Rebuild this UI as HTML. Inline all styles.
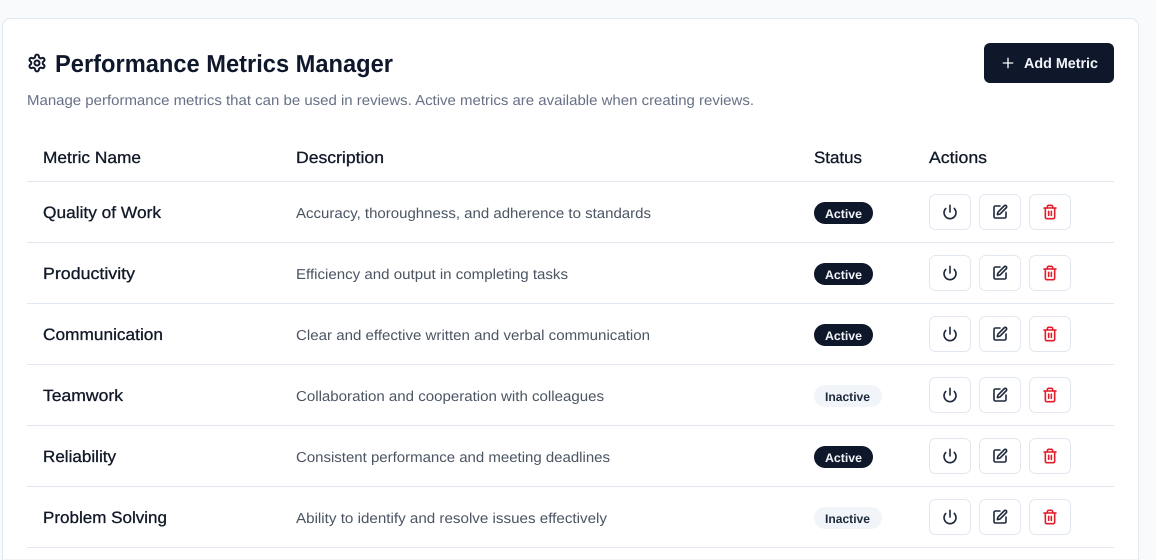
<!DOCTYPE html>
<html lang="en">
<head>
<meta charset="utf-8">
<title>Performance Metrics Manager</title>
<style>
html,body{margin:0;padding:0;width:1156px;height:560px;overflow:hidden;background:#f8fafc}
svg{display:block}
text{font-family:"Liberation Sans",sans-serif;text-rendering:geometricPrecision}
.th,.name{font-size:16.4px;fill:#111827;stroke:#111827;stroke-width:.3px}
.desc{font-size:14.4px;fill:#4b5563}
.sub{font-size:14.4px;fill:#667085}
.bt{font-size:12.4px;font-weight:700}
.i{fill:none;stroke-width:2.4;stroke-linecap:round;stroke-linejoin:round}
</style>
</head>
<body>
<svg width="1156" height="560" viewBox="0 0 1156 560" xmlns="http://www.w3.org/2000/svg">
<defs>
<g id="power" class="i" stroke="#1e293b" transform="scale(.6667)"><path d="M12 2v10"/><path d="M18.4 6.6a9 9 0 1 1-12.77.04"/></g>
<g id="pen" class="i" stroke="#1e293b" transform="scale(.6667)"><path d="M12 3H5a2 2 0 0 0-2 2v14a2 2 0 0 0 2 2h14a2 2 0 0 0 2-2v-7"/><path d="M18.375 2.625a1 1 0 0 1 3 3l-9.013 9.014a2 2 0 0 1-.853.505l-2.873.84a.5.5 0 0 1-.62-.62l.84-2.873a2 2 0 0 1 .506-.852z"/></g>
<g id="trash" class="i" stroke="#e11d2a" transform="scale(.6667)"><path d="M3 6h18"/><path d="M19 6v14c0 1-1 2-2 2H7c-1 0-2-1-2-2V6"/><path d="M8 6V4c0-1 1-2 2-2h4c1 0 2 1 2 2v2"/><path d="M10 11v6"/><path d="M14 11v6"/></g>
<g id="btns">
<rect x="929.5" y=".5" width="41" height="35" rx="6" fill="#fff" stroke="#e2e8f0"/>
<rect x="979.5" y=".5" width="41" height="35" rx="6" fill="#fff" stroke="#e2e8f0"/>
<rect x="1029.5" y=".5" width="41" height="35" rx="6" fill="#fff" stroke="#e2e8f0"/>
<use href="#power" x="942" y="10"/>
<use href="#pen" x="992" y="10"/>
<use href="#trash" x="1042" y="10"/>
</g>
</defs>

<path d="M2.5 560V26.5a8 8 0 0 1 8-8H1130.5a8 8 0 0 1 8 8V560Z" fill="#fff" stroke="#e2e8f0"/>

<g transform="translate(27 53) scale(.8333)" class="i" stroke="#0f172a"><path d="M12.22 2h-.44a2 2 0 0 0-2 2v.18a2 2 0 0 1-1 1.73l-.43.25a2 2 0 0 1-2 0l-.15-.08a2 2 0 0 0-2.73.73l-.22.38a2 2 0 0 0 .73 2.73l.15.1a2 2 0 0 1 1 1.72v.51a2 2 0 0 1-1 1.74l-.15.09a2 2 0 0 0-.73 2.73l.22.38a2 2 0 0 0 2.73.73l.15-.08a2 2 0 0 1 2 0l.43.25a2 2 0 0 1 1 1.73V20a2 2 0 0 0 2 2h.44a2 2 0 0 0 2-2v-.18a2 2 0 0 1 1-1.73l.43-.25a2 2 0 0 1 2 0l.15.08a2 2 0 0 0 2.73-.73l.22-.39a2 2 0 0 0-.73-2.73l-.15-.08a2 2 0 0 1-1-1.74v-.5a2 2 0 0 1 1-1.74l.15-.09a2 2 0 0 0 .73-2.73l-.22-.38a2 2 0 0 0-2.73-.73l-.15.08a2 2 0 0 1-2 0l-.43-.25a2 2 0 0 1-1-1.73V4a2 2 0 0 0-2-2z"/><circle cx="12" cy="12" r="3"/></g>
<text x="55" y="72" font-size="24.6" font-weight="700" fill="#0f172a" textLength="338" lengthAdjust="spacingAndGlyphs">Performance Metrics Manager</text>
<text x="27" y="105" class="sub" textLength="727" lengthAdjust="spacingAndGlyphs">Manage performance metrics that can be used in reviews. Active metrics are available when creating reviews.</text>

<rect x="984" y="43" width="130" height="40" rx="6" fill="#0f172a"/>
<path d="M1003.3 63h9.4M1008 58.3v9.4" fill="none" stroke="#f8fafc" stroke-width="1.33" stroke-linecap="round"/>
<text x="1024" y="68" font-size="14.4" font-weight="700" fill="#f1f5f9" textLength="74" lengthAdjust="spacingAndGlyphs">Add Metric</text>

<text x="43" y="163" class="th" textLength="98" lengthAdjust="spacingAndGlyphs">Metric Name</text>
<text x="296" y="163" class="th" textLength="88" lengthAdjust="spacingAndGlyphs">Description</text>
<text x="814" y="163" class="th" textLength="48" lengthAdjust="spacingAndGlyphs">Status</text>
<text x="929" y="163" class="th" textLength="58" lengthAdjust="spacingAndGlyphs">Actions</text>

<g fill="#e2e8f0">
<rect x="27" y="181" width="1087" height="1"/>
<rect x="27" y="242" width="1087" height="1"/>
<rect x="27" y="303" width="1087" height="1"/>
<rect x="27" y="364" width="1087" height="1"/>
<rect x="27" y="425" width="1087" height="1"/>
<rect x="27" y="486" width="1087" height="1"/>
<rect x="27" y="547" width="1087" height="1"/>
</g>

<!-- Row 1 -->
<text x="43" y="218" class="name" textLength="118" lengthAdjust="spacingAndGlyphs">Quality of Work</text>
<text x="296" y="218" class="desc" textLength="355" lengthAdjust="spacingAndGlyphs">Accuracy, thoroughness, and adherence to standards</text>
<rect x="814" y="202" width="59" height="22" rx="11" fill="#0f172a"/>
<text x="825" y="218" class="bt" fill="#f1f5f9" textLength="37" lengthAdjust="spacingAndGlyphs">Active</text>
<use href="#btns" y="194"/>

<!-- Row 2 -->
<text x="43" y="279" class="name" textLength="92" lengthAdjust="spacingAndGlyphs">Productivity</text>
<text x="296" y="279" class="desc" textLength="272" lengthAdjust="spacingAndGlyphs">Efficiency and output in completing tasks</text>
<rect x="814" y="263" width="59" height="22" rx="11" fill="#0f172a"/>
<text x="825" y="279" class="bt" fill="#f1f5f9" textLength="37" lengthAdjust="spacingAndGlyphs">Active</text>
<use href="#btns" y="255"/>

<!-- Row 3 -->
<text x="43" y="340" class="name" textLength="120" lengthAdjust="spacingAndGlyphs">Communication</text>
<text x="296" y="340" class="desc" textLength="354" lengthAdjust="spacingAndGlyphs">Clear and effective written and verbal communication</text>
<rect x="814" y="324" width="59" height="22" rx="11" fill="#0f172a"/>
<text x="825" y="340" class="bt" fill="#f1f5f9" textLength="37" lengthAdjust="spacingAndGlyphs">Active</text>
<use href="#btns" y="316"/>

<!-- Row 4 -->
<text x="43" y="401" class="name" textLength="80" lengthAdjust="spacingAndGlyphs">Teamwork</text>
<text x="296" y="401" class="desc" textLength="308" lengthAdjust="spacingAndGlyphs">Collaboration and cooperation with colleagues</text>
<rect x="814" y="385" width="68" height="22" rx="11" fill="#f1f5f9"/>
<text x="825" y="401" class="bt" fill="#1e293b" textLength="45" lengthAdjust="spacingAndGlyphs">Inactive</text>
<use href="#btns" y="377"/>

<!-- Row 5 -->
<text x="43" y="462" class="name" textLength="73" lengthAdjust="spacingAndGlyphs">Reliability</text>
<text x="296" y="462" class="desc" textLength="314" lengthAdjust="spacingAndGlyphs">Consistent performance and meeting deadlines</text>
<rect x="814" y="446" width="59" height="22" rx="11" fill="#0f172a"/>
<text x="825" y="462" class="bt" fill="#f1f5f9" textLength="37" lengthAdjust="spacingAndGlyphs">Active</text>
<use href="#btns" y="438"/>

<!-- Row 6 -->
<text x="43" y="523" class="name" textLength="124" lengthAdjust="spacingAndGlyphs">Problem Solving</text>
<text x="296" y="523" class="desc" textLength="311" lengthAdjust="spacingAndGlyphs">Ability to identify and resolve issues effectively</text>
<rect x="814" y="507" width="68" height="22" rx="11" fill="#f1f5f9"/>
<text x="825" y="523" class="bt" fill="#1e293b" textLength="45" lengthAdjust="spacingAndGlyphs">Inactive</text>
<use href="#btns" y="499"/>
</svg>
</body>
</html>
